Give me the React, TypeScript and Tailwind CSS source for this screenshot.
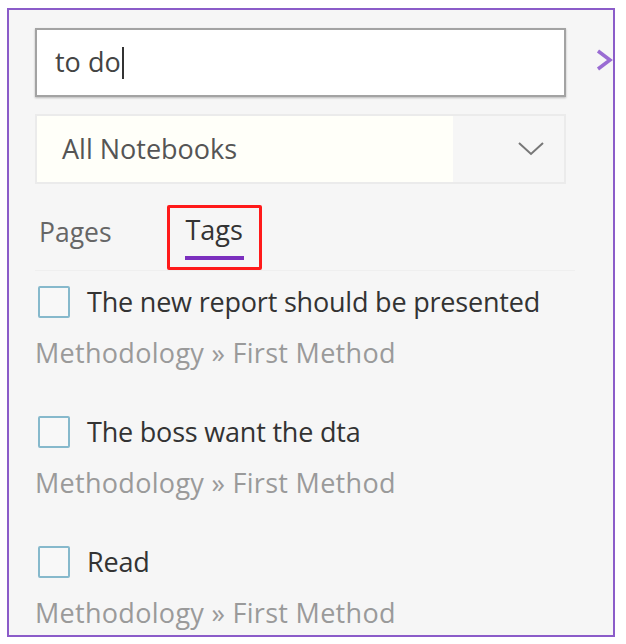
import { useState } from "react";

const items = [
  "The new report should be presented",
  "The boss want the dta",
  "Read",
];

export default function App() {
  const [query] = useState("to do");

  return (
    <div className="w-[626px] h-[644px] bg-white pt-[8px] pl-[7px] font-['Open_Sans',sans-serif]">
      <div className="w-[608px] h-[629px] border-2 border-[#8b5cc9] bg-[#f6f6f6] overflow-hidden pl-[26px]">
        {/* search */}
        <div className="flex items-center mt-[18px]">
          <div className="shrink-0 w-[531px] h-[69px] bg-white border-2 border-[#a3a3a3] shadow-[0_1px_2px_rgba(0,0,0,0.25)] flex items-center pl-[18px]">
            <span className="text-[27px] text-[#444]">{query}</span>
            <span className="w-[2px] h-[32px] bg-[#333] ml-[1px]" />
          </div>
          <svg className="shrink-0 ml-[30px] mt-[-6px]" width="18" height="22" viewBox="0 0 18 22" fill="none">
            <path d="M2 2l12 9-12 9" stroke="#9a6cd3" strokeWidth="3.5" />
          </svg>
        </div>

        {/* notebook dropdown */}
        <div className="w-[531px] h-[70px] mt-[17px] border-2 border-[#ebebeb] flex items-center relative">
          <div className="absolute left-0 top-0 bottom-0 w-[416px] bg-[#fffff9]" />
          <span className="relative pl-[25px] text-[27px] text-[#555]">All Notebooks</span>
          <svg className="relative ml-auto mr-[20px]" width="26" height="14" viewBox="0 0 26 14" fill="none">
            <path d="M1 1l12 11L25 1" stroke="#777" strokeWidth="2" />
          </svg>
        </div>

        {/* tabs */}
        <div className="flex mt-[21px] border-b border-[#efefef] w-[540px]">
          <div className="pt-[8px] ml-[4px] text-[26.5px] text-[#666]">Pages</div>
          <div className="ml-[55px] w-[95px] h-[65px] border-[3px] border-[#ff1a1a] rounded-[2px] flex flex-col items-center pt-[4px]">
            <span className="text-[27px] text-[#333] leading-[36px]">Tags</span>
            <div className="w-[59px] h-[4px] bg-[#7b2fbe] mt-[8px]" />
          </div>
        </div>

        {/* results */}
        <div className="flex flex-col mt-[14px]">
          {items.map((t, i) => (
            <div key={i} className="h-[130px] shrink-0 flex flex-col">
              <div className="flex items-center h-[34px]">
                <div className="ml-[3px] w-[32px] h-[32px] border-2 border-[#86b9cc] rounded-[2px] bg-[#f8f8f8]" />
                <span className="ml-[17px] text-[27px] text-[#333] tracking-[-0.2px]">{t}</span>
              </div>
              <div className="mt-[14px] text-[27px] text-[#9a9a9a] tracking-[0.3px]">
                Methodology » First Method
              </div>
            </div>
          ))}
        </div>
      </div>
    </div>
  );
}
